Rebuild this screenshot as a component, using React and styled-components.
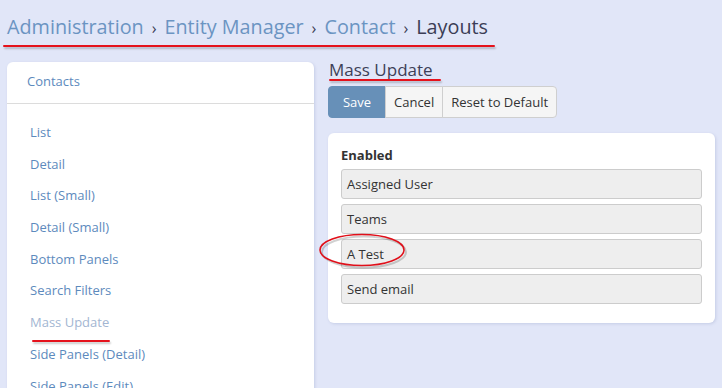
import styled, { createGlobalStyle } from "styled-components";

const GlobalStyle = createGlobalStyle`
  html, body {
    margin: 0;
    background: #e1e6f8;
    overflow: hidden;
  }
  body {
    font-family: "Open Sans", "DejaVu Sans", sans-serif;
    font-size: 13px;
    color: #333;
  }
`;

const layouts = [
  "List",
  "Detail",
  "List (Small)",
  "Detail (Small)",
  "Bottom Panels",
  "Search Filters",
  "Mass Update",
  "Side Panels (Detail)",
  "Side Panels (Edit)",
];

const enabledFields = ["Assigned User", "Teams", "A Test", "Send email"];

export default function App() {
  return (
    <Page>
      <GlobalStyle />
      <Breadcrumb>
        <Marked left={-4} right={-7} bottom={-5}>
          <Crumb>Administration</Crumb>
          <Sep>›</Sep>
          <Crumb>Entity Manager</Crumb>
          <Sep>›</Sep>
          <Crumb>Contact</Crumb>
          <Sep>›</Sep>
          <Crumb current>Layouts</Crumb>
        </Marked>
      </Breadcrumb>

      <Content>
        <SidePanel>
          <SideHeader>Contacts</SideHeader>
          <SideBody>
            {layouts.map((name) => (
              <SideItem key={name} active={name === "Mass Update"}>
                {name === "Mass Update" ? (
                  <Marked left={2} right={-1} bottom={-3}>
                    {name}
                  </Marked>
                ) : (
                  name
                )}
              </SideItem>
            ))}
          </SideBody>
        </SidePanel>

        <Main>
          <Title>
            <Marked left={0} right={-8} bottom={-3}>
              Mass Update
            </Marked>
          </Title>
          <ButtonGroup>
            <Button primary>Save</Button>
            <Button>Cancel</Button>
            <Button>Reset to Default</Button>
          </ButtonGroup>
          <FieldPanel>
            <FieldLabel>Enabled</FieldLabel>
            <FieldList>
              {enabledFields.map((f) => (
                <FieldRow key={f}>{f}</FieldRow>
              ))}
            </FieldList>
            <Circle viewBox="0 0 90 38">
              <ellipse
                cx="45"
                cy="20"
                rx="42"
                ry="15.5"
                fill="none"
                stroke="rgba(0,0,0,0.18)"
                strokeWidth="2"
              />
              <ellipse
                cx="43"
                cy="18"
                rx="42"
                ry="15.5"
                fill="none"
                stroke="#e0101a"
                strokeWidth="1.6"
              />
            </Circle>
          </FieldPanel>
        </Main>
      </Content>
    </Page>
  );
}

const Page = styled.div`
  padding: 13px 7px 0;
`;

const Breadcrumb = styled.div`
  font-size: 19.8px;
  line-height: 28px;
  height: 28px;
  margin-bottom: 21px;
  white-space: nowrap;
`;

const Marked = styled.span`
  position: relative;
  display: inline-block;

  &::after {
    content: "";
    position: absolute;
    left: ${({ left }) => left}px;
    right: ${({ right }) => right}px;
    bottom: ${({ bottom }) => bottom}px;
    height: 2px;
    background: #e5121c;
    border-radius: 1px;
    box-shadow: 1px 2px 2px rgba(0, 0, 0, 0.22);
  }
`;

const Crumb = styled.span`
  color: ${({ current }) => (current ? "#3b3d56" : "#6b94c2")};
`;

const Sep = styled.span`
  color: #3b3d56;
  font-size: 16px;
  margin: 0 8px;
`;

const Content = styled.div`
  display: flex;
  gap: 14px;
  align-items: flex-start;
`;

const SidePanel = styled.div`
  width: 307px;
  height: 400px;
  background: #fff;
  border-radius: 6px;
  box-shadow: 1px 1px 3px rgba(120, 130, 180, 0.25);
`;

const SideHeader = styled.div`
  padding: 10px 20px 13px;
  line-height: 18px;
  color: #5d8abd;
  border-bottom: 1px solid #dcdcdc;
`;

const SideBody = styled.div`
  padding: 13px 23px 0;
`;

const SideItem = styled.div`
  line-height: 31.7px;
  height: 31.7px;
  color: ${({ active }) => (active ? "#a3b6d2" : "#5d8abd")};
  white-space: nowrap;
`;

const Main = styled.div`
  width: 387px;
  position: relative;
`;

const Title = styled.div`
  font-size: 17px;
  line-height: 17px;
  height: 17px;
  color: #3d3f57;
  padding-left: 1px;
  margin-top: -1px;
  margin-bottom: 8px;
`;

const ButtonGroup = styled.div`
  display: flex;
  margin-bottom: 15px;
`;

const Button = styled.button`
  font-family: inherit;
  font-size: 13px;
  height: 32px;
  padding: 0 8px;
  min-width: ${({ primary }) => (primary ? "58px" : "0")};
  background: ${({ primary }) => (primary ? "#6790b8" : "#f5f5f5")};
  color: ${({ primary }) => (primary ? "#fff" : "#333")};
  border: 1px solid ${({ primary }) => (primary ? "#6790b8" : "#cfcfcf")};
  margin-left: -1px;
  border-radius: 0;

  &:first-child {
    margin-left: 0;
    border-radius: 4px 0 0 4px;
  }
  &:last-child {
    border-radius: 0 4px 4px 0;
  }
`;

const FieldPanel = styled.div`
  position: relative;
  background: #fff;
  border-radius: 6px;
  padding: 13px 13px 19px;
  box-shadow: 1px 1px 3px rgba(120, 130, 180, 0.25);
`;

const FieldLabel = styled.div`
  font-weight: bold;
  line-height: 18px;
  color: #333;
  margin-bottom: 5px;
`;

const FieldList = styled.div`
  display: flex;
  flex-direction: column;
  gap: 5px;
`;

const FieldRow = styled.div`
  height: 30px;
  box-sizing: border-box;
  line-height: 28px;
  padding: 0 5px;
  background: #eeeeee;
  border: 1px solid #cccccc;
  border-radius: 3px;
  color: #333;
`;

const Circle = styled.svg`
  position: absolute;
  left: -9px;
  top: 99px;
  width: 90px;
  height: 38px;
  overflow: visible;
`;
